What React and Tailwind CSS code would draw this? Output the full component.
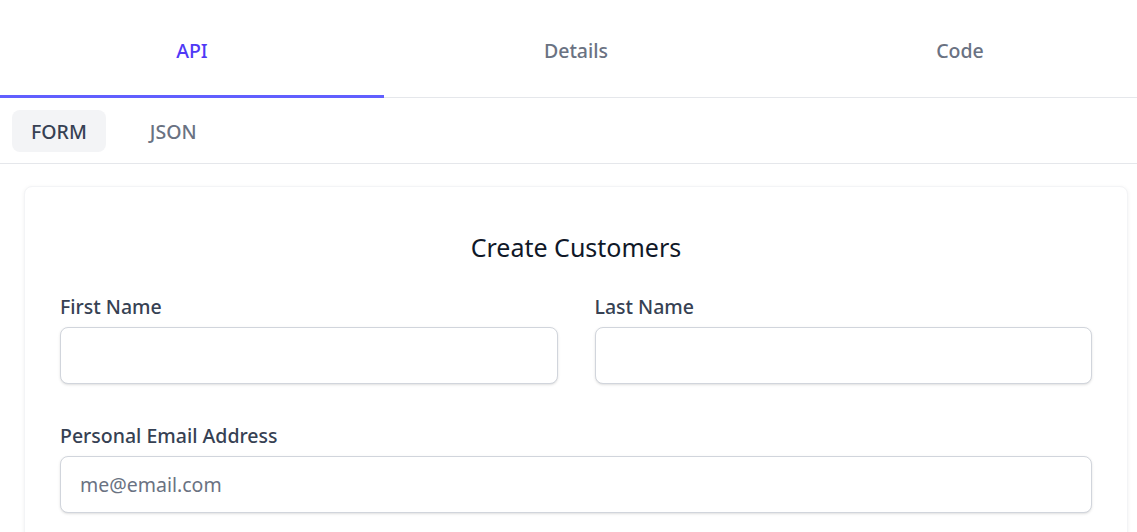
import React, { useState } from 'react';

const tabs = ['API', 'Details', 'Code'];

function Field({ label, placeholder }) {
  return (
    <div className="flex flex-col">
      <label className="text-[19.5px] font-medium text-gray-700 leading-7 mb-[6px]">{label}</label>
      <input
        type="text"
        placeholder={placeholder}
        className="h-[57px] w-full px-[19px] text-[19.5px] text-gray-700 placeholder:text-gray-500 bg-white border border-gray-300 rounded-lg shadow-sm outline-none"
      />
    </div>
  );
}

export default function App() {
  const [activeTab, setActiveTab] = useState('API');
  const [mode, setMode] = useState('FORM');

  return (
    <div className="w-full min-h-screen overflow-hidden bg-white" style={{ fontFamily: '"Noto Sans", "Open Sans", sans-serif' }}>
      <div className="w-[1152px]">
        <div className="flex border-b border-gray-200">
          {tabs.map((tab) => (
            <button
              key={tab}
              onClick={() => setActiveTab(tab)}
              className={
                activeTab === tab
                  ? 'flex-1 h-[98px] text-[19.5px] font-medium text-indigo-600 border-b-[3px] border-indigo-500 -mb-px pt-[7px]'
                  : 'flex-1 h-[98px] text-[19.5px] font-medium text-gray-500 border-b-[3px] border-transparent -mb-px pt-[7px]'
              }
            >
              {tab}
            </button>
          ))}
        </div>

        <div className="flex gap-[8px] px-[12px] pt-[12px] pb-[11px] border-b border-gray-200">
          {['FORM', 'JSON'].map((m) => (
            <button
              key={m}
              onClick={() => setMode(m)}
              className={
                mode === m
                  ? 'h-[42px] px-[19px] pt-[2px] rounded-lg bg-gray-100 text-[19.5px] font-medium text-gray-700'
                  : 'h-[42px] px-[36px] pt-[2px] rounded-lg text-[19.5px] font-medium text-gray-500'
              }
            >
              {m}
            </button>
          ))}
        </div>

        <div className="px-[24px] pt-[22px]">
          <div className="bg-white rounded-lg shadow-[0_1px_4px_rgba(0,0,0,0.06)] border border-gray-100 px-[35px] pt-[44px] pb-[40px]">
            <h2 className="text-center text-[25px] leading-8 text-gray-900 mb-[30px]">Create Customers</h2>
            <div className="grid grid-cols-2 gap-x-[37px]">
              <Field label="First Name" />
              <Field label="Last Name" />
            </div>
            <div className="mt-[38px]">
              <Field label="Personal Email Address" placeholder="me@email.com" />
            </div>
          </div>
        </div>
      </div>
    </div>
  );
}
